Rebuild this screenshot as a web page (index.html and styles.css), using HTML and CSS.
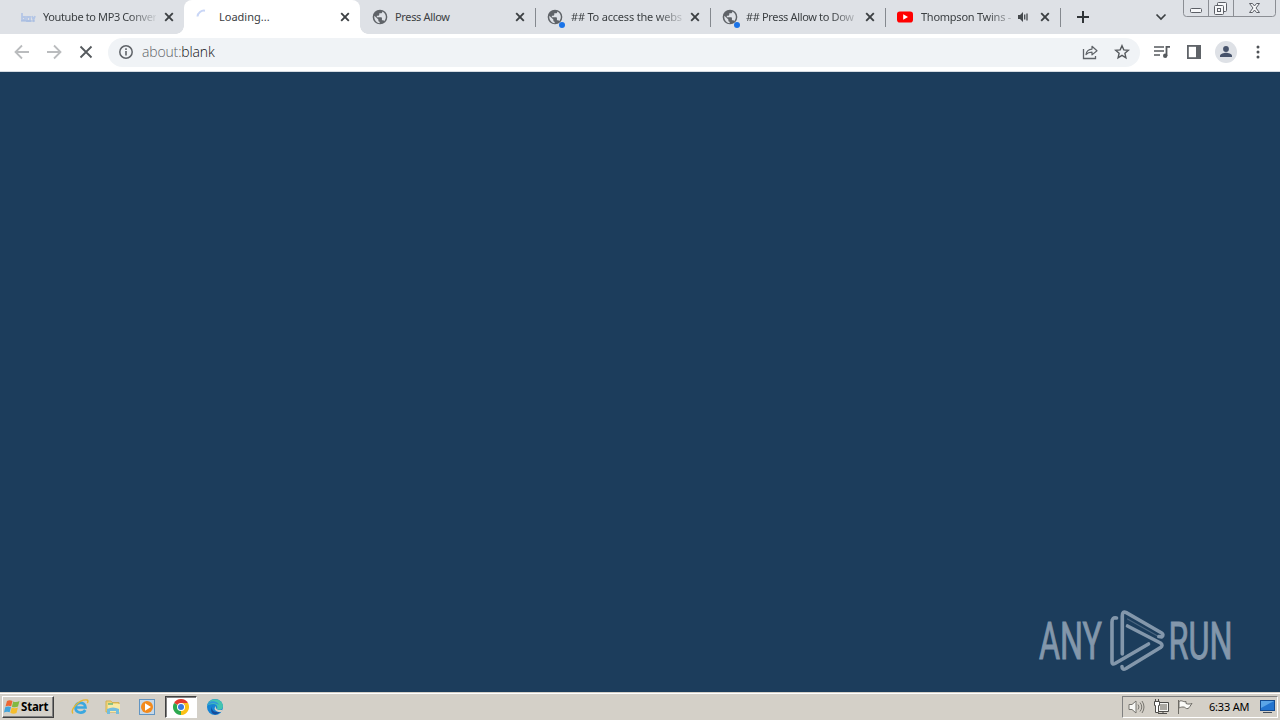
FILE: index.html
```html
<!DOCTYPE html>
<html lang="en">
<head>
<meta charset="utf-8">
<title>about:blank</title>
<link rel="stylesheet" href="styles.css">
</head>
<body>
<svg class="defs" width="0" height="0">
  <symbol id="close" viewBox="0 0 10 10"><path d="M1.200 1.200l7.600 7.600M8.800 1.200L1.200 8.800" fill="none" stroke="#3c4043" stroke-width="1.900"/></symbol>
  <symbol id="globe" viewBox="0 0 24 24"><path fill="#5f6368" d="M12 1a11 11 0 1 0 0 22 11 11 0 0 0 0-22zM3.500 10.200l6 5.600v1.400c0 1.200 1 2 2 2v2C6.500 21 2.700 16 3.500 10.200zM18.300 18.300c-.3-1-1.200-1.600-2.200-1.600h-1.200v-3.200c0-.7-.5-1.200-1.200-1.200H7.300V10h2.400c.7 0 1.200-.5 1.200-1.200V6.500h2.300c1.300 0 2.200-1 2.200-2.100v-.6c5.400 2.500 7.400 9.500 2.900 14.500z"/></symbol>
</svg>
<div class="screen">
  <header class="tabstrip">
    <div class="tab first">
      <span class="favicon"><svg width="16" height="16" viewBox="0 0 16 16"><path d="M2 4v8M2 11h3V8H2M7 8h3v4H7zM12 7l1.500 4L15 7" fill="none" stroke="#b4c6e6" stroke-width="1.800"/><path d="M1 12h14" stroke="#a2b9df"/></svg></span>
      <span class="title t1">Youtube to MP3 Conver</span>
      <svg class="close" width="10" height="10"><use href="#close"/></svg>
    </div>
    <div class="tab active">
      <span class="favicon"><svg width="16" height="16" viewBox="0 0 16 16"><path d="M1.500 7.500A6.500 6.500 0 0 1 9 1.700" fill="none" stroke="#c9d6f6" stroke-width="2"/></svg></span>
      <span class="title">Loading...</span>
      <svg class="close" width="10" height="10"><use href="#close"/></svg>
    </div>
    <div class="tab">
      <span class="favicon"><svg width="16" height="16"><use href="#globe"/></svg></span>
      <span class="title t3">Press Allow</span>
      <svg class="close" width="10" height="10"><use href="#close"/></svg>
    </div>
    <div class="tab ruled">
      <span class="favicon dot"><svg width="16" height="16"><use href="#globe"/></svg></span>
      <span class="title t4">## To access the webs</span>
      <svg class="close" width="10" height="10"><use href="#close"/></svg>
    </div>
    <div class="tab ruled">
      <span class="favicon dot"><svg width="16" height="16"><use href="#globe"/></svg></span>
      <span class="title t5">## Press Allow to Dow</span>
      <svg class="close" width="10" height="10"><use href="#close"/></svg>
    </div>
    <div class="tab ruled last">
      <span class="favicon"><svg width="16" height="16" viewBox="0 0 16 16"><rect y="2.500" width="16" height="11" rx="2.800" fill="#f00"/><path d="M6.200 5.300v5.400L11 8z" fill="#fff"/></svg></span>
      <span class="title t6">Thompson Twins -</span>
      <svg class="sound" width="12" height="12" viewBox="0 0 12 12"><path d="M1 4h2l3-3v10L3 8H1z" fill="#45494d"/><path d="M7.700 3.500v5M10 2.500v7" stroke="#45494d" stroke-width="1.300"/></svg>
      <svg class="close" width="10" height="10"><use href="#close"/></svg>
    </div>
    <svg class="plus" width="12" height="12" viewBox="0 0 12 12"><path d="M6 0v12M0 6h12" stroke="#303438" stroke-width="2"/></svg>
    <svg class="chevron" width="12" height="8" viewBox="0 0 12 8"><path d="M1.500 1.500L6 6l4.500-4.500" fill="none" stroke="#3c4043" stroke-width="1.700"/></svg>
    <svg class="winbuttons" width="94" height="18" viewBox="0 0 94 18">
      <path d="M.5 0v13.500q0 3 3 3h86q3 0 3-3V0M25.500 0v16M50.500 0v16" fill="none" stroke="#8b8e94"/>
      <rect x="7.500" y="8.500" width="11" height="4" rx="1" fill="#f6f7f9" stroke="#5c5f66"/>
      <g fill="#f6f7f9" stroke="#5c5f66"><rect x="34.500" y="2.500" width="9" height="9" rx="1"/><rect x="31.500" y="5.500" width="9" height="9" rx="1"/><rect x="34.500" y="8.500" width="3" height="3"/></g>
      <path d="M66.500 3.500h3l2 2.500 2-2.500h3l-3.500 4.500 3.500 4.500h-3l-2-2.500-2 2.500h-3L70 8z" fill="#f6f7f9" stroke="#5c5f66"/>
    </svg>
  </header>

  <nav class="toolbar">
    <svg class="back" width="16" height="16" viewBox="0 0 16 16"><path d="M15 8H2M8 1.500L1.500 8 8 14.500" fill="none" stroke="#babcbe" stroke-width="1.800"/></svg>
    <svg class="forward" width="16" height="16" viewBox="0 0 16 16"><path d="M1 8h13M8 1.500L14.500 8 8 14.500" fill="none" stroke="#babcbe" stroke-width="1.800"/></svg>
    <svg class="stop" width="14" height="14" viewBox="0 0 14 14"><path d="M1.500 1.500l11 11M12.500 1.500l-11 11" stroke="#55595d" stroke-width="1.800"/></svg>
    <div class="omnibox">
      <svg class="info" width="14" height="14" viewBox="0 0 14 14"><circle cx="7" cy="7" r="6.200" fill="none" stroke="#5f6368" stroke-width="1.500"/><path d="M7 6v4.500M7 3.300v1.600" stroke="#5f6368" stroke-width="1.600"/></svg>
      <span class="url"><span class="scheme">about:</span>blank</span>
      <svg class="share" width="16" height="16" viewBox="0 0 16 16"><path d="M1.500 5v9.500h12V12" fill="none" stroke="#5f6368" stroke-width="1.300"/><path d="M4 10.500c.5-3.500 2.500-5.200 6-5.400V2.300L15 6.700l-5 4.200V8.200c-2.700 0-4.500.6-6 2.300z" fill="none" stroke="#5f6368" stroke-width="1.200" stroke-linejoin="round"/></svg>
      <svg class="star" width="16" height="16" viewBox="0 0 16 16"><path d="M8 1.700l1.800 4.200 4.600.4-3.500 3 1 4.500L8 11.400l-3.900 2.400 1-4.500-3.500-3 4.600-.4z" fill="none" stroke="#55595d" stroke-width="1.400"/></svg>
    </div>
    <svg class="queue" width="17" height="14" viewBox="0 0 17 14"><path d="M0 2h10M0 6h10M0 10h6" stroke="#55595d" stroke-width="1.700"/><path d="M12.500 11V1.800H16" fill="none" stroke="#55595d" stroke-width="1.800"/><circle cx="11.200" cy="10.800" r="2.200" fill="#55595d"/></svg>
    <svg class="panel" width="14" height="14" viewBox="0 0 14 14"><rect x=".9" y=".9" width="12.200" height="12.200" fill="#fff" stroke="#5f6368" stroke-width="1.800"/><path d="M9 0h5v14H9z" fill="#5f6368"/></svg>
    <svg class="avatar" width="22" height="22" viewBox="0 0 22 22"><circle cx="11" cy="11" r="11" fill="#dee1e6"/><circle cx="11" cy="8" r="2.900" fill="#47536b"/><path d="M5 16v-1.300c0-2 4-3 6-3s6 1 6 3V16z" fill="#47536b"/></svg>
    <svg class="more" width="4" height="14" viewBox="0 0 4 14"><g fill="#4e5256"><circle cx="2" cy="2" r="1.500"/><circle cx="2" cy="7" r="1.500"/><circle cx="2" cy="12" r="1.500"/></g></svg>
  </nav>

  <main class="page">
    <svg class="watermark" width="196" height="64" viewBox="1037 608 196 64">
      <g fill="#8397ab" stroke="#8397ab" stroke-width="1" font-family="Roboto, sans-serif" font-size="52">
        <text x="1039" y="659" textLength="63" lengthAdjust="spacingAndGlyphs">ANY</text>
        <text x="1168.500" y="659" textLength="64" lengthAdjust="spacingAndGlyphs">RUN</text>
      </g>
      <g fill="none" stroke="#8397ab" stroke-width="3.600" stroke-linecap="round" stroke-linejoin="round">
        <path d="M1116.500 618q-4.500-1-4.500 4v40q0 3 3 1.500l33.500-19.500"/>
        <path d="M1122.300 654v-38q0-5.500 4-3.300l35 20q3 2 .5 4.300l-3-.5"/>
        <path d="M1127.500 626l33 17q3 2 0 4.500l-34.500 21q-4 2-4-2"/>
        <path d="M1127.500 619l31 17.500M1122.300 658.500l25-14.500" stroke-width="1.200" opacity=".45"/>
      </g>
    </svg>
  </main>

  <footer class="taskbar">
    <div class="start">
      <svg width="16" height="16" viewBox="0 0 16 16"><path d="M3 2Q5.500.5 8.500 2L7.200 7.300Q4 6 1.500 7.500z" fill="#ed6733"/><path d="M9.200 2.500q3 1.300 6.300-.5L14 7.600Q11 9 7.900 7.700z" fill="#82b942"/><path d="M1.200 8.200Q4 7 7 8.100L5.700 13.300Q3 12 0 13.500z" fill="#43a4db"/><path d="M7.700 8.500q3 1.300 6.200 0L12.500 13.900q-3 1.700-6.200-.2z" fill="#f5bd2d"/></svg>
      <span>Start</span>
    </div>
    <svg class="ie" width="18" height="18" viewBox="0 0 18 18"><path d="M14.200 12c-2.200 4-9.700 3.500-9.700-2.500s9.500-6.500 10 0H5.500" fill="none" stroke="#3ba8e0" stroke-width="2.700"/><path d="M2 15.500C-1 12 8 1 16 2c1.500.3 1 2 .3 3" fill="none" stroke="#e6b632" stroke-width="1.400"/></svg>
    <svg class="folder" width="16" height="16" viewBox="0 0 16 16"><path d="M1 2h5l1 1.500h7V13H1z" fill="#f0d478" stroke="#d2b153"/><path d="M3 5h12v8H3z" fill="#f9e9a4"/><path d="M2 10q6-3 12 0v5h-3v-3H5v3H2z" fill="#73bddd"/><path d="M3 5h5" stroke="#68b77b" stroke-width="1.500"/></svg>
    <svg class="player" width="16" height="16" viewBox="0 0 16 16"><rect x=".5" y=".5" width="15" height="15" fill="#c6d8e8" stroke="#6295c2"/><circle cx="8" cy="8" r="6" fill="#f38a1c"/><path d="M6 4.200v7.600L12 8z" fill="#fff"/></svg>
    <div class="running"><svg width="16" height="16" viewBox="0 0 16 16"><path d="M8 8L1.070 4A8 8 0 0 1 14.930 4z" fill="#e33b2e"/><path d="M8 8l6.930-4A8 8 0 0 1 8 16z" fill="#fbc116"/><path d="M8 8v8A8 8 0 0 1 1.070 4z" fill="#2da94f"/><path d="M8 4h6.930a8 8 0 0 1 .6 1.300H8z" fill="#fbc116"/><path d="M11.500 10L8 16l3-1z" fill="#fbc116"/><circle cx="8" cy="8" r="4" fill="#fff"/><circle cx="8" cy="8" r="3" fill="#3979df"/></svg></div>
    <svg class="edge" width="16" height="16" viewBox="0 0 16 16"><circle cx="8" cy="8" r="8" fill="#1684d4"/><path d="M.2 7C1-1 13-2 15.500 5c2 5-3 7-6 5 2-2 0-5-3-5C3 5 .5 6 .2 7z" fill="#44c4b0"/><path d="M.2 7C1 1 10 1 12 6 7 3 2 4 .2 7z" fill="#3095dc"/><path d="M6 6c-3 4 0 8 7 7-6 6-12 0-7-7z" fill="#174c9b"/><path d="M9 7c-1 3 2 5 7 3.500L14.500 13C9 13.500 5.500 10 9 7z" fill="#d4d0c8"/></svg>
    <div class="tray">
      <svg class="volume" width="17" height="16" viewBox="0 0 17 16"><path d="M1 5.500h3L8 2v12l-4-3.500H1z" fill="#f8f8f5" stroke="#77756f"/><path d="M10 5.500q2 2.500 0 5M12 3.500q3.500 4.500 0 9M14 2q4 6 0 12" fill="none" stroke="#77756f"/></svg>
      <svg class="network" width="16" height="16" viewBox="0 0 16 16"><path d="M4.500 3.500h11v9h-11z" fill="#f5f5f2" stroke="#4d4c49"/><path d="M7 5h7v6H7z" fill="#aaa8a2"/><path d="M5 14.500h9M10 13v1" stroke="#4d4c49"/><path d="M1.500 2.500h5v4h-1v7h-3v-7h-1zM2.500 0v2M5.500 0v2" fill="#fff" stroke="#4d4c49"/></svg>
      <svg class="flag" width="16" height="16" viewBox="0 0 16 16"><path d="M1.500 1v14M2 2.500c3-2 4 1 7 0v2c2 1 4 .5 6 0-2 2-2 4-4 5-2 1-3-2-5-1.500-2 0-3 .5-4 1z" fill="#fbfbf8" stroke="#6d6b65"/></svg>
      <time>6:33 AM</time>
      <svg class="desktop" width="15" height="14" viewBox="0 0 15 14"><rect x=".5" y=".5" width="14" height="10" fill="#2374cf" stroke="#134b91"/><path d="M1 1h13L1 8z" fill="#5ba5e7"/><path d="M3 12.500h9" stroke="#414b58"/></svg>
    </div>
  </footer>
</div>
</body>
</html>
```

FILE: styles.css
```css
* { box-sizing: border-box; }
body { margin: 0; background: #1c3d5c; font-family: "Noto Sans", sans-serif; overflow: hidden; }
svg { display: block; flex: none; }
.defs { position: absolute; }
.screen { width: 1280px; height: 720px; display: flex; flex-direction: column; }

.tabstrip { height: 34px; flex: none; display: flex; background: #dee1e6; padding-left: 8px; }
.tab { width: 175px; height: 34px; flex: none; display: flex; align-items: center; padding-left: 12px; position: relative; }
.first { width: 176px; }
.active { width: 176px; background: #fff; border-radius: 8px 8px 0 0; }
.active::before, .active::after { content: ""; position: absolute; bottom: 0; width: 8px; height: 8px; }
.active::before { left: -8px; background: radial-gradient(circle at 0 0, transparent 7.5px, #fff 8px); }
.active::after { right: -8px; background: radial-gradient(circle at 100% 0, transparent 7.5px, #fff 8px); }
.ruled::before, .last::after { content: ""; position: absolute; top: 8px; width: 1px; height: 19px; background: #85898f; }
.ruled::before { left: 0; }
.last::after { right: -1px; }
.favicon { width: 16px; height: 16px; flex: none; position: relative; }
.dot::after { content: ""; position: absolute; left: 12px; top: 13px; width: 6px; height: 6px; border-radius: 50%; background: #1a73e8; }
.title { width: 113px; flex: none; margin-left: 7px; white-space: nowrap; font-size: 11px; line-height: 18px; color: #3c4043; }
.t1, .t4, .t5 { -webkit-mask-image: linear-gradient(90deg, #000 86px, transparent 116px); mask-image: linear-gradient(90deg, #000 86px, transparent 116px); }
.t1 { letter-spacing: -.38px; }
.t3 { letter-spacing: -.35px; }
.t4 { letter-spacing: -.2px; }
.t5 { letter-spacing: -.35px; }
.t6 { letter-spacing: -.25px; }
.close { margin-left: 8px; }
.t3 + .close { margin-left: 7px; }
.ruled .title { margin-left: 8px; }
.ruled .title + .close { margin-left: 6px; }
.last .title { width: 90px; -webkit-mask-image: linear-gradient(90deg, #000 66px, transparent 98px); mask-image: linear-gradient(90deg, #000 66px, transparent 98px); }
.sound { margin-left: 6px; }
.last .close { margin-left: 11px; }
.plus { margin: 11px 0 0 17px; }
.chevron { margin: 13px 0 0 66px; }
.winbuttons { margin-left: 16px; }

.toolbar { height: 38px; flex: none; display: flex; align-items: center; background: #fff; border-bottom: 1px solid #d5dbe1; padding: 0 0 1px 14px; }
.forward { margin-left: 16px; }
.stop { margin-left: 17px; }
.omnibox { margin-left: 15px; width: 1032px; height: 29px; border-radius: 15px; background: #f0f3f6; display: flex; align-items: center; padding-left: 11px; }
.url { margin-left: 9px; font: 300 14px/20px "Open Sans", "Noto Sans", sans-serif; letter-spacing: -.15px; color: #101113; }
.scheme { color: #5f6368; }
.share { margin-left: auto; }
.star { margin: 0 10px 0 16px; }
.queue { margin-left: 14px; }
.panel { margin-left: 16px; }
.avatar { margin-left: 14px; }
.more { margin-left: 19px; }

.page { flex: 1; display: flex; align-items: flex-end; justify-content: flex-end; padding: 0 47px 20px 0; background: #1c3d5c; }

.taskbar { height: 28px; flex: none; display: flex; align-items: center; background: #d4d0c8; border-top: 1px solid #d4d0c8; box-shadow: inset 0 1px #fff; padding: 2px 2px 1px; }
.start { width: 52px; height: 22px; display: flex; align-items: center; gap: 1px; padding-left: 1px; border: 1px solid; border-color: #fff #404040 #404040 #fff; box-shadow: inset -1px -1px #808080; font: bold 11.5px/18px "Noto Sans", sans-serif; letter-spacing: -.2px; color: #000; }
.ie { margin-left: 17px; }
.folder { margin-left: 16px; }
.player { margin-left: 18px; }
.running { margin-left: 10px; width: 32px; height: 22px; display: flex; align-items: center; justify-content: center; background: #fff; border: 1px solid; border-color: #404040 #fff #fff #404040; box-shadow: inset 1px 1px #808080; }
.edge { margin-left: 10px; }
.tray { margin-left: auto; width: 156px; height: 22px; display: flex; align-items: center; border: 1px solid; border-color: #808080 #fff #fff #808080; padding-left: 5px; }
.network { margin-left: 8px; }
.flag { margin-left: 8px; }
.tray time { width: 43px; margin-left: 16px; font-size: 11px; line-height: 18px; letter-spacing: -.2px; white-space: nowrap; color: #000; }
.desktop { margin-left: 8px; }
```
